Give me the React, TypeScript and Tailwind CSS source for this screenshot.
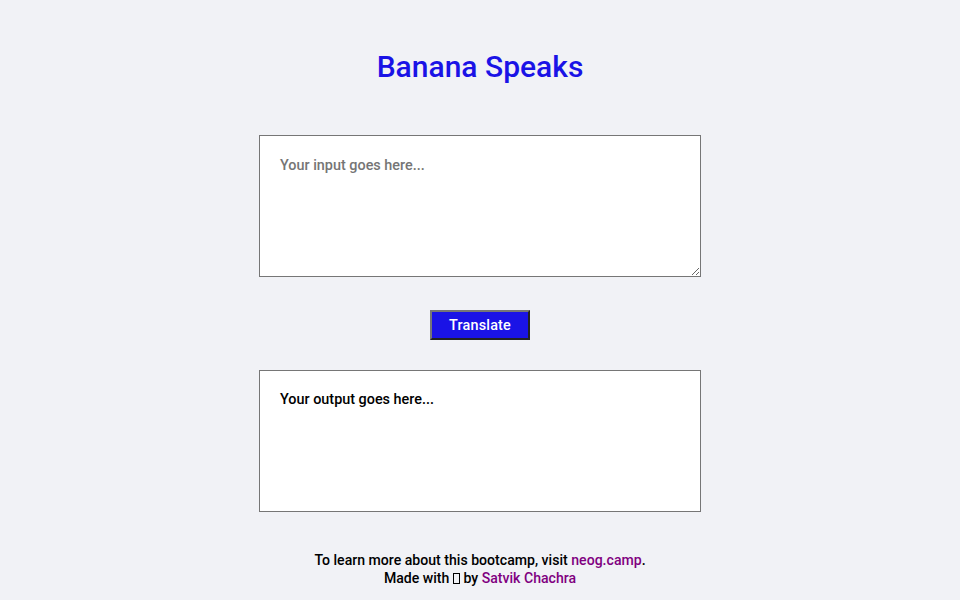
import React from "react";

export default function App() {
  return (
    <div
      className="min-h-[600px] w-full bg-[#f1f2f6] flex flex-col items-center"
      style={{ fontFamily: "Roboto, 'Noto Sans', sans-serif" }}
    >
      <h1 className="mt-[48px] h-[38px] leading-[38px] text-[30px] font-medium text-[#1a13e6]">
        Banana Speaks
      </h1>
      <textarea
        className="mt-[49px] w-[442px] h-[142px] box-border bg-white border border-[#767676] px-5 pt-[21px] pb-[19px] text-[14.4px] font-medium leading-[18px] text-black placeholder:text-[#757575] outline-none"
        placeholder="Your input goes here..."
      />
      <button className="mt-[33px] w-[100px] h-[30px] pt-[2px] bg-[#1a13e6] text-white text-[14.4px] tracking-[0.2px] font-medium border-2 border-t-[#767676] border-l-[#767676] border-r-[#222] border-b-[#222]">
        Translate
      </button>
      <div className="mt-[30px] w-[442px] h-[142px] box-border bg-white border border-[#767676] px-5 pt-[20px] pb-[19px] text-[14.4px] font-medium leading-[18px] text-black">
        Your output goes here...
      </div>
      <footer className="mt-[39px] text-center text-[14.1px] font-medium leading-[18px] text-black">
        <div>
          To learn more about this bootcamp, visit{" "}
          <a className="text-[#800080]" href="#">neog.camp</a>.
        </div>
        <div>
          Made with{" "}
          <span className="inline-block w-[7px] h-[11px] border border-black align-[-1px]" />{" "}
          by <a className="text-[#800080]" href="#">Satvik Chachra</a>
        </div>
      </footer>
    </div>
  );
}
